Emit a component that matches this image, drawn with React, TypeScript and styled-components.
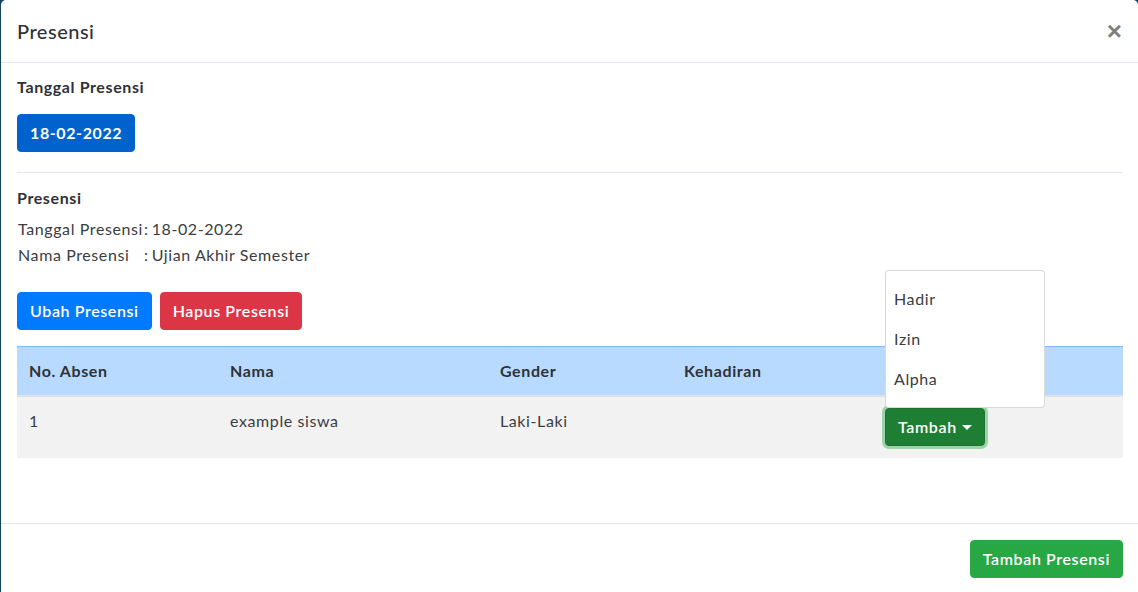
import React from "react";
import styled, { createGlobalStyle } from "styled-components";

const GlobalStyle = createGlobalStyle`
  html, body {
    margin: 0;
    padding: 0;
    background: #12425f;
  }
  body {
    font-family: "Lato", "Noto Sans", sans-serif;
    color: #343a40;
    font-size: 16px;
    line-height: 24px;
    letter-spacing: 0.6px;
  }
  * { box-sizing: border-box; }
`;

const Modal = styled.div`
  margin-left: 1px;
  width: 1137px;
  height: 592px;
  background: #fff;
  border-radius: 5px 5px 0 0;
  display: flex;
  flex-direction: column;
  overflow: hidden;
`;

const Header = styled.div`
  display: flex;
  align-items: center;
  justify-content: space-between;
  height: 63px;
  padding: 16px 16px 16px 16px;
  border-bottom: 1px solid #e3e6f0;
`;

const Title = styled.h5`
  margin: 0;
  font-size: 20px;
  font-weight: 500;
  line-height: 30px;
  letter-spacing: 0.5px;
  color: #2f3237;
`;

const Close = styled.button`
  border: 0;
  background: transparent;
  padding: 0;
  margin-right: 0;
  font-family: "Liberation Sans", sans-serif;
  font-size: 26px;
  font-weight: 700;
  line-height: 26px;
  color: #000;
  opacity: 0.5;
`;

const Body = styled.div`
  flex: 1;
  padding: 16px 16px 0 16px;
`;

const Label = styled.div`
  font-weight: 700;
  line-height: 20px;
  color: #2f3237;
  margin-top: -2px;
  margin-bottom: 17px;
`;

const Btn = styled.button<{ $bg: string; $bold?: boolean }>`
  display: inline-block;
  font-family: inherit;
  font-size: 16px;
  line-height: 24px;
  letter-spacing: 0.6px;
  padding: 6px 12px;
  border: 1px solid ${(p) => p.$bg};
  border-radius: 4px;
  background: ${(p) => p.$bg};
  color: #fff;
  font-weight: ${(p) => (p.$bold ? 700 : 600)};
`;

const Divider = styled.hr`
  border: 0;
  border-top: 1px solid #e3e6f0;
  margin: 20px 0 13px 0;
`;

const SectionTitle = styled.div`
  font-weight: 700;
  color: #2f3237;
  margin-bottom: 7px;
`;

const InfoGrid = styled.div`
  display: grid;
  grid-template-columns: auto 1fr;
  row-gap: 2px;
  padding-left: 1px;
  color: #3a3d42;
`;

const InfoValue = styled.div`
  &::before {
    content: ":";
    margin-left: 1px;
    margin-right: 3px;
  }
`;

const Actions = styled.div`
  display: flex;
  gap: 8px;
  margin-top: 25px;
  margin-bottom: 16px;
`;

const Table = styled.div`
  width: 1106px;
  border-top: 1px solid #7abaff;
`;

const Row = styled.div<{ $head?: boolean }>`
  display: grid;
  grid-template-columns: 201px 270px 184px 201px 250px;
  background: ${(p) => (p.$head ? "#b8daff" : "#f2f2f2")};
  border-bottom: ${(p) => (p.$head ? "2px solid #dee2e6" : "0")};
  font-weight: ${(p) => (p.$head ? 700 : 400)};
  color: ${(p) => (p.$head ? "#2f3237" : "#3a3d42")};
`;

const Cell = styled.div`
  padding: 12px;
  min-height: 48px;
`;

const DropWrap = styled.div`
  position: relative;
  display: inline-block;
  margin-top: -1px;
`;

const TambahBtn = styled.button`
  font-family: inherit;
  font-size: 16px;
  line-height: 24px;
  letter-spacing: 0.6px;
  padding: 6px 12px;
  border: 1px solid #1c7430;
  border-radius: 4px;
  background: #1e7e34;
  color: #fff;
  font-weight: 600;
  box-shadow: 0 0 0 3px rgba(72, 180, 97, 0.5);
  display: inline-flex;
  align-items: center;
  gap: 4px;
`;

const Caret = styled.span`
  display: inline-block;
  width: 0;
  height: 0;
  border-top: 5px solid #fff;
  border-left: 5px solid transparent;
  border-right: 5px solid transparent;
  margin-left: 1px;
  margin-top: 1px;
`;

const Menu = styled.div`
  position: absolute;
  left: 0;
  bottom: 100%;
  margin-bottom: 0;
  width: 160px;
  padding: 8px 0;
  background: #fff;
  border: 1px solid rgba(0, 0, 0, 0.15);
  border-radius: 4px;
  z-index: 5;
`;

const MenuItem = styled.div`
  padding: 8px 8px;
  line-height: 24px;
  color: #3a3d42;
`;

const Footer = styled.div`
  display: flex;
  justify-content: flex-end;
  border-top: 1px solid #e3e6f0;
  padding: 16px 15px 14px 16px;
`;

export default function App() {
  return (
    <>
      <GlobalStyle />
      <Modal>
        <Header>
          <Title>Presensi</Title>
          <Close aria-label="Close">×</Close>
        </Header>
        <Body>
          <Label>Tanggal Presensi</Label>
          <Btn $bg="#0062cc" $bold>
            18-02-2022
          </Btn>
          <Divider />
          <SectionTitle>Presensi</SectionTitle>
          <InfoGrid>
            <div>Tanggal Presensi</div>
            <InfoValue>18-02-2022</InfoValue>
            <div>Nama Presensi</div>
            <InfoValue>Ujian Akhir Semester</InfoValue>
          </InfoGrid>
          <Actions>
            <Btn $bg="#007bff">Ubah Presensi</Btn>
            <Btn $bg="#dc3545">Hapus Presensi</Btn>
          </Actions>
          <Table>
            <Row $head>
              <Cell>No. Absen</Cell>
              <Cell>Nama</Cell>
              <Cell>Gender</Cell>
              <Cell>Kehadiran</Cell>
              <Cell>Aksi</Cell>
            </Row>
            <Row>
              <Cell>1</Cell>
              <Cell>example siswa</Cell>
              <Cell>Laki-Laki</Cell>
              <Cell></Cell>
              <Cell>
                <DropWrap>
                  <Menu>
                    <MenuItem>Hadir</MenuItem>
                    <MenuItem>Izin</MenuItem>
                    <MenuItem>Alpha</MenuItem>
                  </Menu>
                  <TambahBtn>
                    Tambah <Caret />
                  </TambahBtn>
                </DropWrap>
              </Cell>
            </Row>
          </Table>
        </Body>
        <Footer>
          <Btn $bg="#28a745">Tambah Presensi</Btn>
        </Footer>
      </Modal>
    </>
  );
}
